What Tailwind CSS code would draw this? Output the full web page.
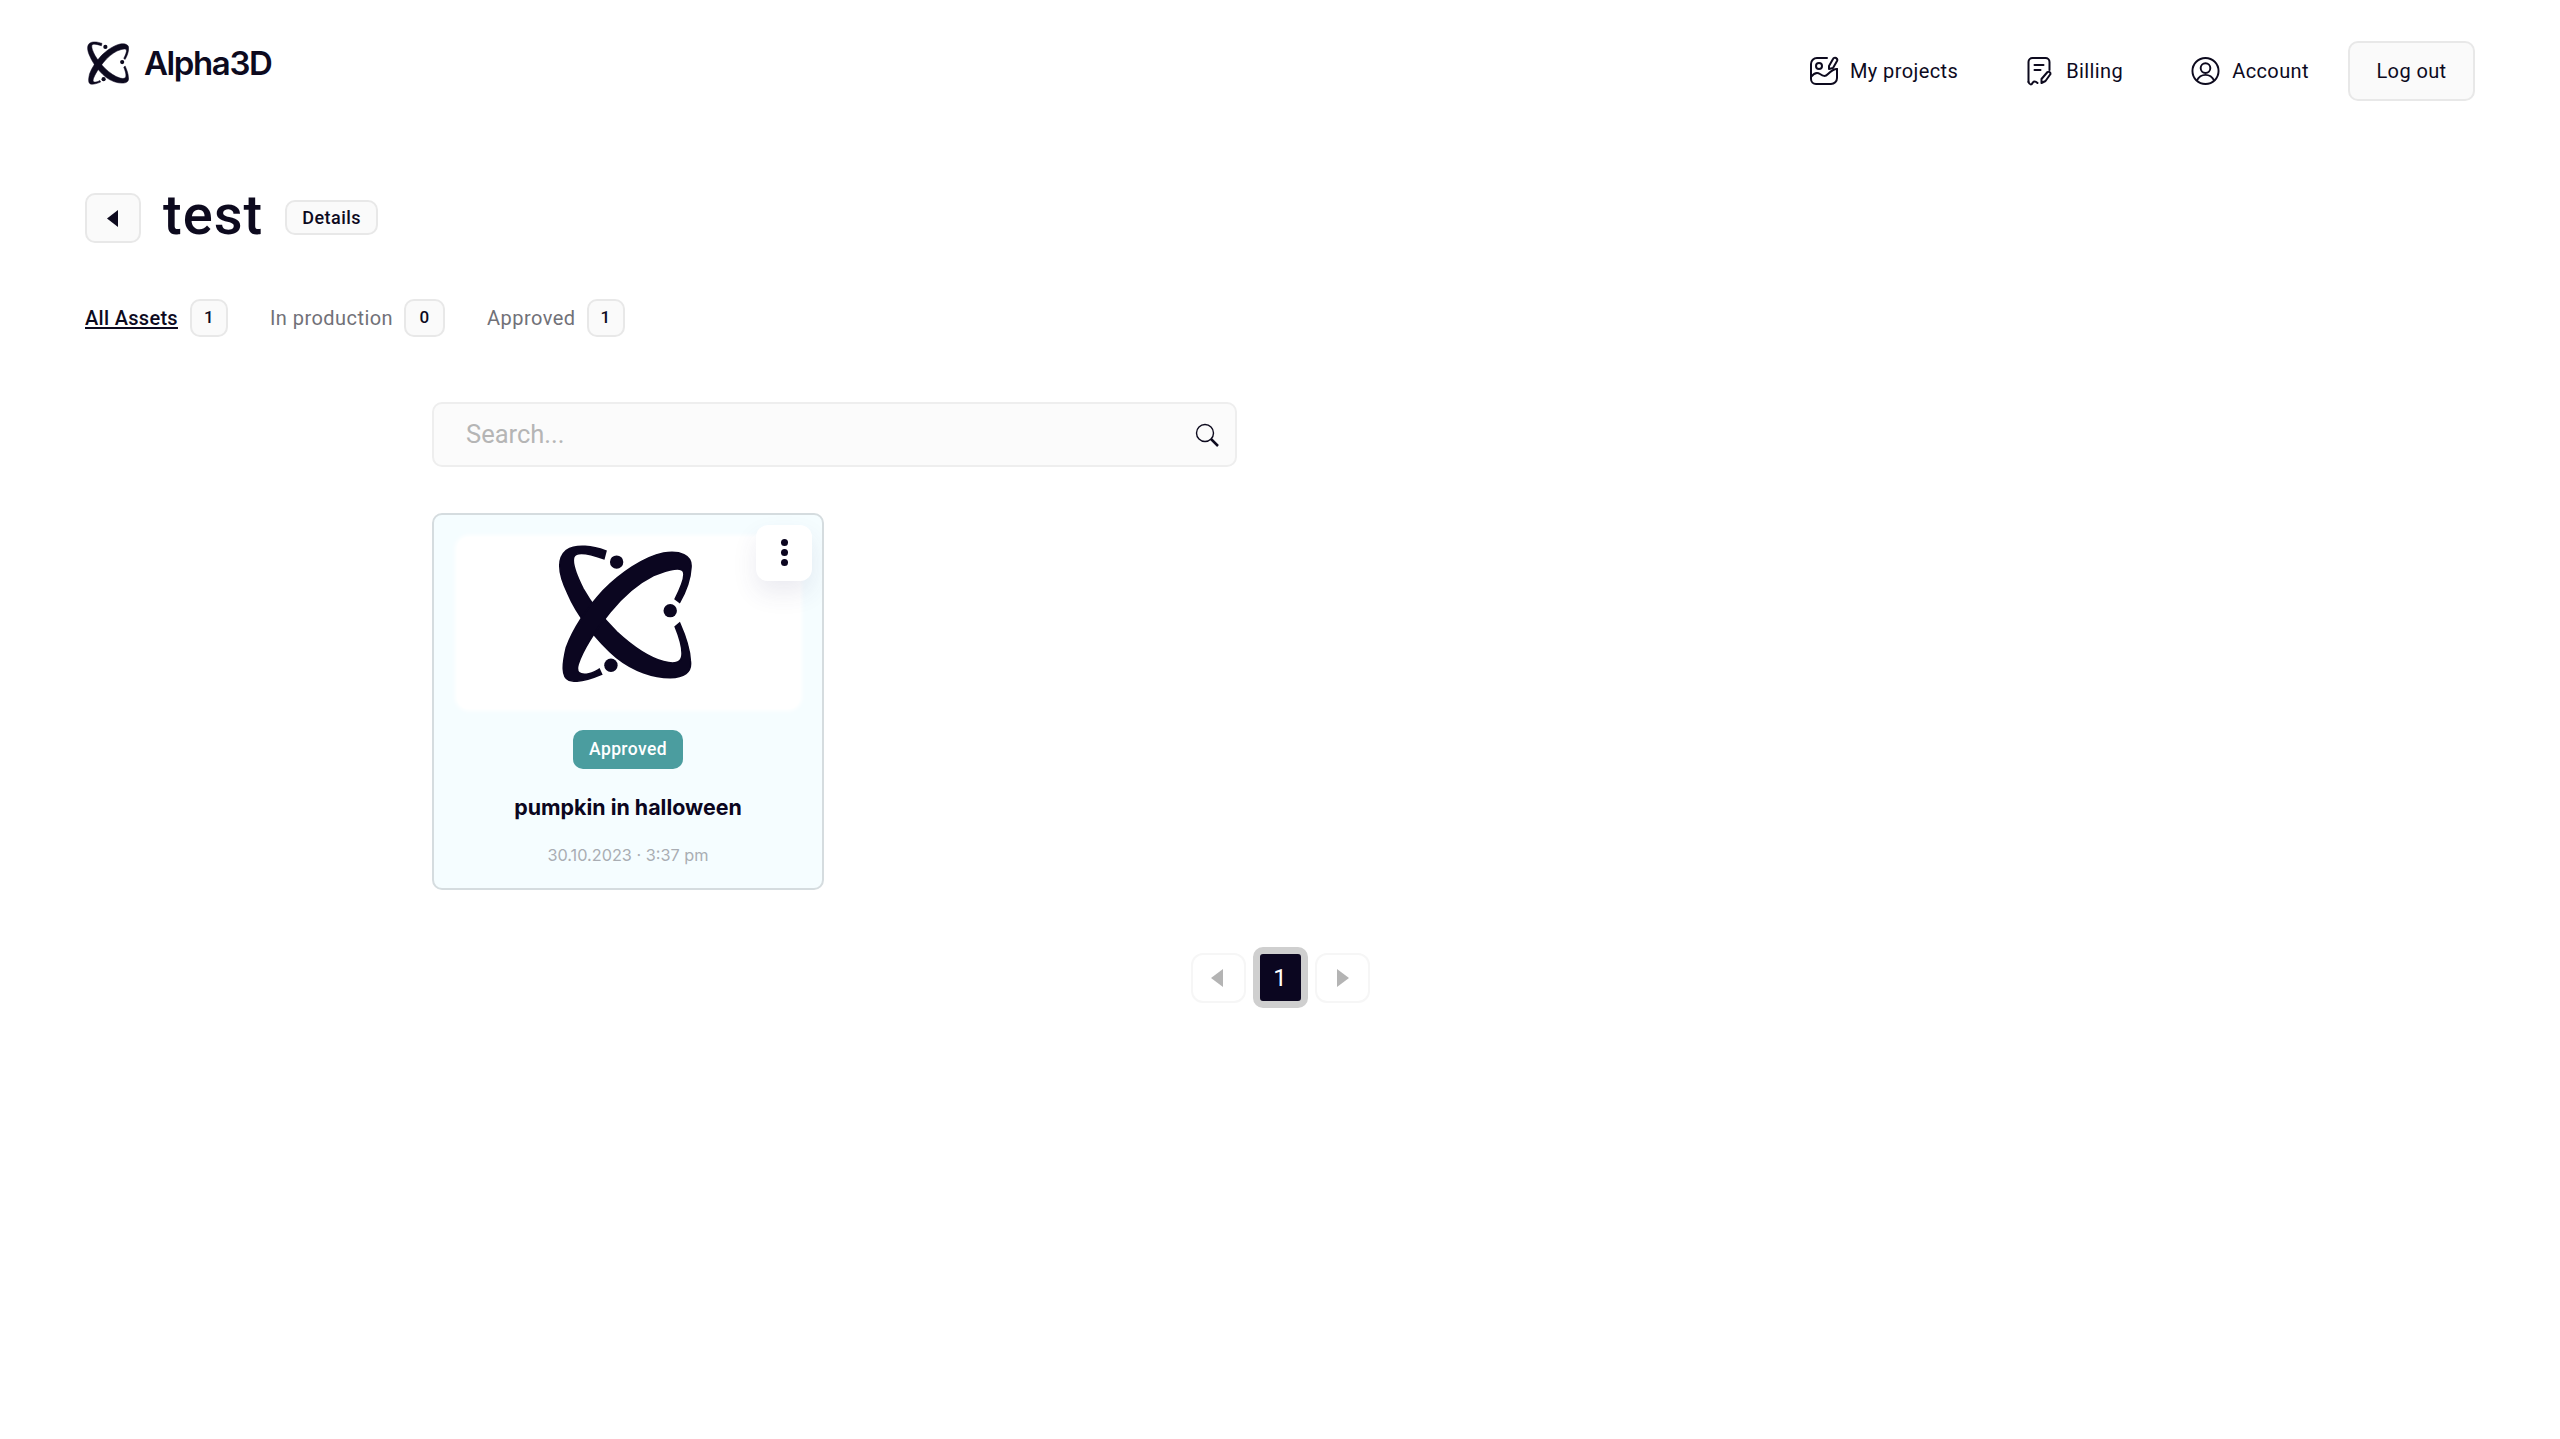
<!DOCTYPE html>
<html lang="en">
<head>
  <meta charset="UTF-8" />
  <title>Alpha3D - test</title>
  <script src="https://cdn.jsdelivr.net/npm/@tailwindcss/browser@4"></script>
</head>
<body class="bg-white text-[#0d0a1e] font-['Roboto',sans-serif] min-h-[1439px]">

  <!-- logo shape, used in the header and on the asset card -->
  <svg class="hidden">
    <symbol id="logo" viewBox="415 134 400 409">
      <path stroke="#0b0620" stroke-width="5" d="M558 152C520 138 470 130 440 150C410 175 418 225 445 280C470 340 530 420 590 470C640 510 700 530 750 530C790 530 815 515 810 480C808 440 795 405 778 367L765 378C778 410 788 440 785 465C782 488 760 490 730 482C680 468 630 430 590 393C555 358 515 310 490 265C470 225 455 190 462 170C470 150 510 160 552 175Z" />
      <path stroke="#0b0620" stroke-width="5" d="M545 520C510 535 470 545 448 538C425 528 428 490 440 440C460 385 500 325 550 270C600 220 670 170 730 158C780 150 815 165 812 200C810 240 795 275 778 305L765 295C780 265 795 230 790 215C785 198 750 205 700 225C660 245 610 285 570 335C530 385 490 445 475 490C468 515 480 522 500 520C515 518 525 512 538 505Z" />
      <circle cx="590" cy="185" r="20" />
      <circle cx="750" cy="330" r="20" />
      <circle cx="573" cy="493" r="20" />
    </symbol>
  </svg>

  <header class="flex justify-between items-start pt-[41px] pl-[87px] pr-[85px] h-[101px]">
    <a class="flex items-center gap-[15px] h-[44px]">
      <svg class="w-[42px] h-[44px] fill-[#0d0a1e]"><use href="#logo" /></svg>
      <span class="font-['Inter',sans-serif] font-semibold text-[33px] tracking-[-1.4px] leading-none">Alpha3D</span>
    </a>
    <nav class="flex items-center text-[20px] font-[450] tracking-[0.4px]">
      <a class="flex items-center gap-[11px]">
        <svg class="w-[30px] h-[30px]" viewBox="0 0 30 30" fill="none" stroke="currentColor" stroke-width="2" stroke-linecap="round" stroke-linejoin="round">
          <path d="M18 2H8a6 6 0 0 0-6 6v15a5 5 0 0 0 5 5h15a6 6 0 0 0 6-6v-9" />
          <circle cx="10" cy="10" r="3" />
          <path d="M2 21c3-4 6-5 9-3s5 3 8 0 6-5 9-5" />
          <path d="M20 10l4-7a2 2 0 0 1 4 2l-4 7-4 1z" />
        </svg>
        <span>My projects</span>
      </a>
      <a class="flex items-center gap-[13px] ml-[68px]">
        <svg class="w-[27px] h-[30px]" viewBox="0 0 26 30" fill="none" stroke="currentColor" stroke-width="2" stroke-linecap="round" stroke-linejoin="round">
          <path d="M2 26V6a4 4 0 0 1 4-4h13a4 4 0 0 1 4 4v8" />
          <path d="M8 9h9M8 14h6" />
          <path d="M2 26c1 3 3 3 4 1s3-2 5 0" />
          <path d="M15 23l6-7a2 2 0 0 1 3 2l-5 7-4 2z" />
        </svg>
        <span>Billing</span>
      </a>
      <a class="flex items-center gap-[12px] ml-[68px]">
        <svg class="w-[29px] h-[30px]" viewBox="0 0 30 30" fill="none" stroke="currentColor" stroke-width="2">
          <circle cx="15" cy="15" r="13.500" />
          <circle cx="15" cy="12" r="5" />
          <path d="M6 25c2-4 5-6 9-6s7 2 9 6" />
        </svg>
        <span>Account</span>
      </a>
      <button class="ml-[39px] w-[127px] h-[60px] rounded-[10px] border-2 border-[#e8e8e8] bg-[#fafafa]">Log out</button>
    </nav>
  </header>

  <main class="px-[85px]">
    <div class="flex items-center mt-[92px] h-[50px]">
      <button class="flex items-center justify-center w-[56px] h-[50px] rounded-[10px] border-2 border-[#e8e8e8] bg-[#fafafa]">
        <svg class="w-[11px] h-[17px] mr-[2px]" viewBox="0 0 11 17"><path d="M11 0v17L0 8.500z" fill="currentColor" /></svg>
      </button>
      <h1 class="ml-[22px] pb-[6px] text-[56px] font-medium leading-none tracking-[1px]">test</h1>
      <button class="ml-[22px] mb-[1px] w-[93px] h-[35px] rounded-[10px] border-2 border-[#e8e8e8] bg-[#fafafa] text-[18px] font-medium tracking-[0.45px]">Details</button>
    </div>

    <div class="flex items-center mt-[56px] h-[38px] text-[20px] tracking-[0.45px]">
      <a class="underline underline-offset-2 font-medium tracking-[0.3px]">All Assets</a>
      <span class="ml-[12px] flex items-center justify-center w-[38px] h-[38px] rounded-[10px] border-2 border-[#e8e8e8] bg-[#fafafa] text-[17px] font-medium">1</span>
      <a class="ml-[42px] text-[#717178]">In production</a>
      <span class="ml-[11px] flex items-center justify-center w-[41px] h-[38px] rounded-[10px] border-2 border-[#e8e8e8] bg-[#fafafa] text-[17px] font-medium">0</span>
      <a class="ml-[42px] text-[#717178]">Approved</a>
      <span class="ml-[11px] flex items-center justify-center w-[38px] h-[38px] rounded-[10px] border-2 border-[#e8e8e8] bg-[#fafafa] text-[17px] font-medium">1</span>
    </div>

    <div class="ml-[347px] w-[805px]">
      <div class="flex items-center justify-between mt-[65px] h-[65px] pl-[32px] pr-[16px] rounded-[10px] border-2 border-[#eeeeee] bg-[#fbfbfb]">
        <span class="text-[25.500px] text-[#b5b5b5]">Search...</span>
        <svg class="w-[24px] h-[24px]" viewBox="0 0 24 24" fill="none" stroke="currentColor" stroke-width="1.400">
          <circle cx="10" cy="10" r="8.500" />
          <path d="M16 16l7 7" stroke-width="2.500" />
        </svg>
      </div>

      <!-- asset card -->
      <div class="relative mt-[46px] w-[392px] h-[377px] rounded-[10px] border-2 border-[#d5dcdf] bg-[#f5fdff] flex flex-col items-center overflow-hidden">
        <div class="mt-[22px] w-[343px] h-[172px] rounded-[12px] bg-white shadow-[0_0_4px_2px_#ffffff]"></div>
        <svg class="absolute left-[124px] top-[30px] w-[134px] h-[137px] fill-[#0b0620]"><use href="#logo" /></svg>
        <button class="absolute left-[322px] top-[10px] flex flex-col items-center justify-center gap-[3px] pb-[2px] w-[56px] h-[56px] rounded-[12px] bg-white shadow-[0_12px_24px_rgba(60,60,120,0.10)]">
          <span class="w-[7px] h-[7px] rounded-full bg-[#0b0620]"></span>
          <span class="w-[7px] h-[7px] rounded-full bg-[#0b0620]"></span>
          <span class="w-[7px] h-[7px] rounded-full bg-[#0b0620]"></span>
        </button>
        <span class="mt-[21px] flex items-center justify-center w-[110px] h-[39px] rounded-[10px] bg-[#4b9d9f] text-white text-[17.500px] font-medium tracking-[0.4px]">Approved</span>
        <p class="mt-[24px] font-['Inter',sans-serif] font-bold text-[21.400px] leading-[28px] text-[#0b0620]">pumpkin in halloween</p>
        <p class="mt-[24px] font-['Inter',sans-serif] text-[16.300px] leading-[20px] text-[#a9adb3]">30.10.2023 · 3:37 pm</p>
      </div>
    </div>

    <!-- pagination -->
    <div class="flex justify-center items-center gap-[7px] mt-[57px]">
      <button class="flex items-center justify-center w-[55px] h-[50px] rounded-[12px] border-2 border-[#f6f6f6]">
        <svg class="w-[12px] h-[18px] mr-[2px]" viewBox="0 0 12 18"><path d="M12 0v18L0 9z" fill="#b4b4b4" /></svg>
      </button>
      <button class="flex items-center justify-center w-[55px] h-[61px] rounded-[10px] border-[7px] border-[#cfcfcf] bg-[#0b0620] text-white text-[24px]">1</button>
      <button class="flex items-center justify-center w-[55px] h-[50px] rounded-[12px] border-2 border-[#f6f6f6]">
        <svg class="w-[12px] h-[18px] ml-[2px]" viewBox="0 0 12 18"><path d="M0 0v18L12 9z" fill="#b4b4b4" /></svg>
      </button>
    </div>
  </main>

</body>
</html>
